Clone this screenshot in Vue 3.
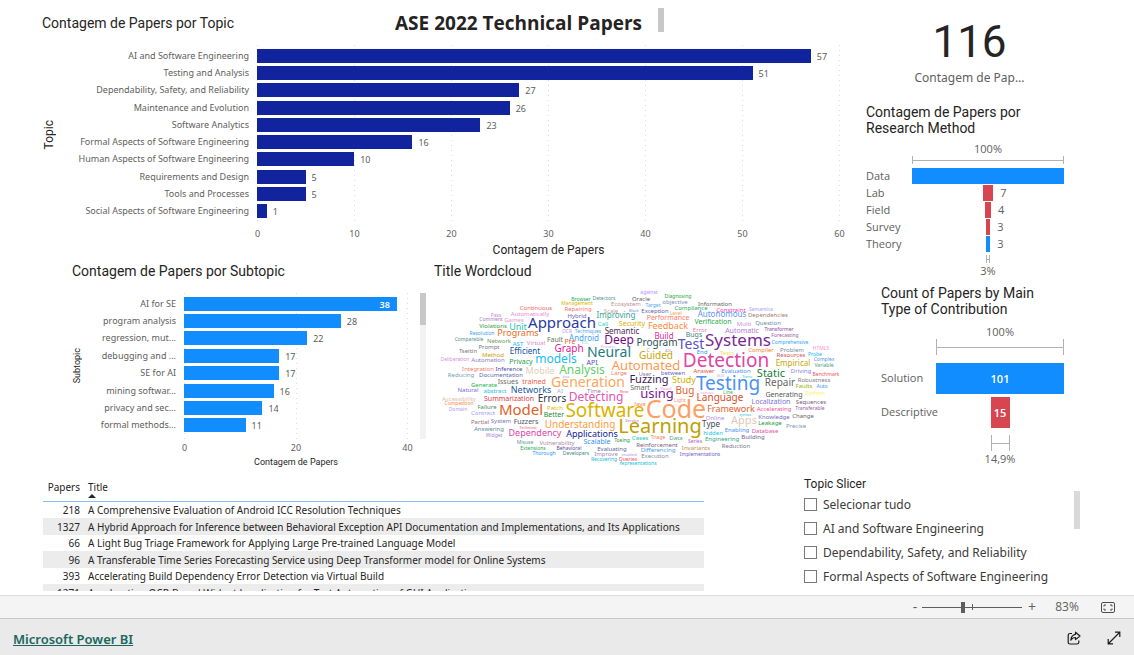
<script setup>
const topicChart = {
  id: 'topic',
  yTitle: 'Topic',
  max: 60,
  ticks: [0, 10, 20, 30, 40, 50, 60],
  rows: [
    ['AI and Software Engineering', 57],
    ['Testing and Analysis', 51],
    ['Dependability, Safety, and Reliability', 27],
    ['Maintenance and Evolution', 26],
    ['Software Analytics', 23],
    ['Formal Aspects of Software Engineering', 16],
    ['Human Aspects of Software Engineering', 10],
    ['Requirements and Design', 5],
    ['Tools and Processes', 5],
    ['Social Aspects of Software Engineering', 1],
  ],
}

const subtopicChart = {
  id: 'subtopic',
  yTitle: 'Subtopic',
  max: 40,
  ticks: [0, 20, 40],
  rows: [
    ['AI for SE', 38],
    ['program analysis', 28],
    ['regression, mut...', 22],
    ['debugging and ...', 17],
    ['SE for AI', 17],
    ['mining softwar...', 16],
    ['privacy and sec...', 14],
    ['formal methods...', 11],
  ],
}

const funnels = [
  {
    id: 'method',
    title: ['Contagem de Papers por', 'Research Method'],
    max: 99,
    last: '3%',
    rows: [
      { label: 'Data', value: 99, tone: 'blue', show: 'none' },
      { label: 'Lab', value: 7, tone: 'red', show: 'outside' },
      { label: 'Field', value: 4, tone: 'red', show: 'outside' },
      { label: 'Survey', value: 3, tone: 'red', show: 'outside' },
      { label: 'Theory', value: 3, tone: 'blue', show: 'outside' },
    ],
  },
  {
    id: 'contribution',
    title: ['Count of Papers by Main', 'Type of Contribution'],
    max: 101,
    last: '14,9%',
    rows: [
      { label: 'Solution', value: 101, tone: 'blue', show: 'inside' },
      { label: 'Descriptive', value: 15, tone: 'red', show: 'inside' },
    ],
  },
]

const pct = (value, max) => `${(value / max) * 100}%`

const papers = [
  [218, 'A Comprehensive Evaluation of Android ICC Resolution Techniques'],
  [1327, 'A Hybrid Approach for Inference between Behavioral Exception API Documentation and Implementations, and Its Applications'],
  [66, 'A Light Bug Triage Framework for Applying Large Pre-trained Language Model'],
  [96, 'A Transferable Time Series Forecasting Service using Deep Transformer model for Online Systems'],
  [393, 'Accelerating Build Dependency Error Detection via Virtual Build'],
  [1271, 'Accelerating OCR-Based Widget Localization for Test Automation of GUI Applications'],
]

const slicer = [
  'Selecionar tudo',
  'AI and Software Engineering',
  'Dependability, Safety, and Reliability',
  'Formal Aspects of Software Engineering',
]

// word, centre x, baseline y, size, colour
const words = [
  ['Browser', 581, 301, 5, '#1aab40'], ['Detectors', 604, 300, 5, '#4f9095'],
  ['Management', 577, 305, 5, '#d9b300'], ['Continuous', 536, 310, 6, '#fd625e'],
  ['Repairing', 578, 311, 6, '#fd7070'], ['Automatically', 530, 316, 6, '#e68ad8'],
  ['Ecosystem', 626, 306, 6, '#b98f8f'], ['Oracle', 641, 301, 6, '#6b6460'],
  ['against', 649, 294, 5, '#b58cff'], ['Pass', 496, 317, 5, '#c88ad0'],
  ['Comment', 491, 321, 5, '#a97bb5'], ['Games', 514, 322, 6, '#e39acf'],
  ['Violations', 493, 328, 6, '#2e9e4a'], ['Unit', 518, 330, 9, '#15c6c0'],
  ['Approach', 562, 328, 15, '#2a3aa5'], ['Hybrid', 577, 318, 6, '#6a66b5'],
  ['Improving', 616, 318, 8, '#37a794'], ['Scale', 611, 313, 6, '#c09fa0'],
  ['Black', 634, 312, 4, '#7b8be8'], ['Exception', 655, 313, 6, '#5b5fa0'],
  ['Call', 603, 326, 6, '#1fd0c8'], ['Security', 632, 326, 7, '#e0b000'],
  ['Programs', 518, 336, 9, '#f06a1a'], ['Resolution', 482, 335, 5, '#3b9ef0'],
  ['OCR', 567, 333, 5, '#b79be0'], ['Techniques', 588, 333, 5, '#4aa3f0'],
  ['Semantic', 622, 334, 8, '#4a2a55'], ['Android', 584, 341, 8, '#4a9ff5'],
  ['Fault', 555, 342, 7, '#5b7a50'], ['Pre', 570, 344, 7, '#f0641e'],
  ['ICC', 585, 344, 4, '#7ac5f0'], ['Process', 608, 348, 4, '#c9a5f0'],
  ['Deep', 619, 344, 12, '#750985'], ['Comparable', 469, 341, 5, '#4f9088'],
  ['Network', 499, 343, 6, '#6f9a5e'], ['AST', 518, 346, 6, '#15b5f5'],
  ['Virtual', 536, 345, 6, '#d98ad0'], ['Graph', 569, 352, 10, '#e6178f'],
  ['Neural', 609, 357, 14, '#1f7a80'], ['Prompt', 489, 349, 6, '#777777'],
  ['Tseitin', 468, 353, 6, '#777777'], ['Method', 493, 357, 6, '#c9a100'],
  ['Efficient', 525, 354, 8, '#0a4fa8'], ['Deliberation', 455, 361, 5, '#e08adb'],
  ['Automation', 488, 362, 6, '#8a7bd0'], ['Privacy', 521, 364, 7, '#1aa050'],
  ['models', 556, 363, 12, '#15bdf0'], ['API', 592, 365, 7, '#5a52b0'],
  ['Analysis', 582, 374, 12, '#5fd068'], ['Integration', 478, 371, 6, '#fd7a70'],
  ['Inference', 509, 371, 6, '#4a4fa8'], ['Mobile', 540, 374, 9, '#e0cfb8'],
  ['Reducing', 461, 377, 6, '#6f9fb0'], ['Documentation', 501, 377, 6, '#5a6aa8'],
  ['Large', 619, 375, 6, '#fd7b5a'], ['Automated', 646, 370, 13, '#fe9a50'],
  ['box', 566, 378, 4, '#b59be0'], ['Guided', 656, 359, 10, '#c9a500'],
  ['Fuzzing', 649, 383, 11, '#3a2050'], ['Issues', 508, 384, 7, '#6b6b6b'],
  ['trained', 534, 384, 7, '#f0604a'], ['Generation', 588, 387, 14, '#fea55e'],
  ['objective', 675, 304, 6, '#7a8fb0'], ['Diagnosing', 678, 298, 5, '#1aab40'],
  ['Information', 715, 306, 6, '#666666'], ['Compliance', 691, 310, 6, '#1aab60'],
  ['Target', 653, 307, 5, '#4aa3f0'], ['Constraint', 731, 312, 6, '#f73db5'],
  ['Semantics', 761, 311, 5, '#a5a0f5'], ['Level', 676, 315, 5, '#fea050'],
  ['Performance', 668, 320, 7, '#fd7a6a'], ['Autonomous', 722, 317, 8, '#5c93f5'],
  ['Dependencies', 768, 317, 6, '#a08070'], ['Verification', 713, 324, 7, '#1faa45'],
  ['Feedback', 668, 329, 9, '#fe8a3c'], ['Multi', 744, 326, 6, '#d08ae0'],
  ['Question', 768, 325, 6, '#6a92a5'], ['Error', 700, 332, 6, '#f57aa5'],
  ['Automatic', 742, 333, 7, '#b57ad5'], ['Transformer', 779, 331, 5, '#8a4a9a'],
  ['Bugs', 694, 337, 7, '#3f857f'], ['Build', 664, 339, 8, '#e8279a'],
  ['Systems', 738, 346, 17, '#7a2a95'], ['Forecasting', 785, 337, 5, '#9a5aa5'],
  ['Comprehensive', 790, 344, 5, '#30a5f5'], ['Program', 657, 346, 10, '#2a5050'],
  ['Test', 691, 349, 14, '#5a50c8'], ['Problem', 792, 352, 6, '#7088a8'],
  ['HTML5', 821, 350, 5, '#f595c5'], ['C', 648, 352, 5, '#9999cc'],
  ['AIS', 668, 352, 4, '#bb99dd'], ['End', 702, 354, 6, '#2a9af5'],
  ['Tests', 727, 355, 6, '#ffdb69'], ['Compiler', 761, 352, 6, '#fe8030'],
  ['Resources', 791, 357, 6, '#d5506a'], ['Probe', 815, 356, 5, '#15b5f0'],
  ['Detection', 726, 367, 19, '#e044a7'], ['Empirical', 793, 366, 8, '#c5a800'],
  ['Complex', 824, 361, 5, '#4a95f0'], ['Variable', 824, 367, 5, '#4a9a85'],
  ['Answer', 704, 373, 6, '#e8503a'], ['Evaluation', 736, 373, 6, '#3f95f5'],
  ['Static', 771, 377, 11, '#168040'], ['Driving', 801, 373, 6, '#7a85f0'],
  ['Benchmark', 826, 376, 5, '#f05058'], ['User', 645, 376, 6, '#8a7a9a'],
  ['between', 673, 375, 6, '#6a6ab5'], ['Trees', 747, 378, 4, '#15c5e8'],
  ['GUI', 720, 377, 4, '#b5a5e5'], ['Study', 684, 383, 9, '#d0b000'],
  ['Robustness', 814, 382, 6, '#808088'], ['Testing', 728, 390, 19, '#4a90f5'],
  ['Repair', 780, 386, 10, '#666666'], ['Generate', 484, 387, 6, '#1ab550'],
  ['Natural', 468, 392, 6, '#7a70d8'], ['abstract', 495, 393, 6, '#18bde8'],
  ['Networks', 531, 393, 9, '#1a5aa5'], ['AI', 560, 393, 6, '#b5a5e5'],
  ['Time', 594, 393, 6, '#9a7aaa'], ['New', 624, 393, 4, '#f55a6a'],
  ['Smart', 640, 390, 7, '#666666'], ['Accessibility', 459, 401, 6, '#d5c0b0'],
  ['Competition', 459, 405, 5, '#fe8a3c'], ['Domain', 458, 411, 5, '#b59bf5'],
  ['Summarization', 509, 401, 7, '#d8404a'], ['Errors', 552, 402, 10, '#2a3550'],
  ['Detecting', 596, 401, 12, '#e055b5'], ['Failure', 487, 409, 6, '#4f8a60'],
  ['Model', 521, 415, 15, '#e0602a'], ['Patch', 555, 410, 6, '#e0b800'],
  ['Contract', 483, 415, 6, '#9aa0f5'], ['Better', 554, 417, 7, '#1e8a3a'],
  ['Software', 605, 417, 19, '#d9b300'], ['Partial', 480, 424, 6, '#9a6a75'],
  ['System', 501, 423, 6, '#7a75c5'], ['Fuzzers', 526, 424, 7, '#4f5560'],
  ['Understanding', 580, 428, 10, '#fe9a3a'], ['Technical', 528, 429, 4, '#f5505a'],
  ['Answering', 489, 431, 6, '#5a8a95'], ['Dependency', 535, 436, 9, '#e044a7'],
  ['Applications', 592, 437, 9, '#12239e'], ['Widget', 494, 437, 5, '#a585e5'],
  ['Learning', 660, 433, 20, '#c0a000'], ['Misuse', 525, 444, 5, '#5a9a95'],
  ['Service', 632, 422, 4, '#c05ad0'],
  ['Vulnerability', 557, 445, 6, '#b08a9a'], ['Scalable', 597, 444, 7, '#2f90f5'],
  ['Toeing', 622, 442, 5, '#1e9a40'], ['Extensions', 533, 450, 5, '#1aab50'],
  ['Behavioral', 569, 450, 5, '#5a4aa0'], ['Evaluating', 612, 451, 6, '#5a6a9a'],
  ['Improve', 606, 456, 6, '#9a8abf'], ['Thorough', 544, 455, 5, '#3095f5'],
  ['Developers', 576, 455, 5, '#3f8a8a'], ['Recovering', 604, 461, 5, '#15b5e8'],
  ['Queries', 628, 461, 5, '#f5505a'], ['enabled', 629, 456, 4, '#b58af5'],
  ['representations', 638, 465, 5, '#15bde0'], ['Cases', 640, 440, 6, '#15c8b0'],
  ['Visual', 666, 390, 4, '#f57ae5'], ['using', 657, 398, 13, '#7a1a95'],
  ['Bug', 685, 394, 10, '#e0602a'], ['Java', 640, 406, 6, '#fe8040'],
  ['Light', 680, 402, 5, '#fe9a70'], ['canvas', 707, 394, 4, '#f59ae5'],
  ['Line', 728, 394, 5, '#2abb60'], ['Language', 720, 401, 10, '#d8502a'],
  ['Generating', 784, 397, 7, '#555555'], ['Faults', 804, 388, 6, '#9ab010'],
  ['Auto', 822, 388, 5, '#4095f5'], ['Python', 815, 395, 6, '#fff060'],
  ['Localization', 771, 404, 7, '#7a70d8'], ['Sequences', 811, 404, 6, '#7a6080'],
  ['Framework', 731, 412, 9, '#e8602a'], ['Accelerating', 774, 411, 6, '#f050a5'],
  ['Transferable', 810, 410, 5, '#9a5aa5'], ['Code', 676, 418, 25, '#fe9f66'],
  ['Online', 715, 420, 6, '#b58ae5'], ['syntax', 745, 416, 4, '#15c8e0'],
  ['Apps', 744, 424, 11, '#dccbb8'], ['Knowledge', 774, 419, 6, '#7a6abf'],
  ['Change', 803, 418, 6, '#666666'], ['Leakage', 770, 425, 6, '#1e9a40'],
  ['Precise', 796, 428, 6, '#7a9ab0'], ['Type', 711, 427, 8, '#3a4a50'],
  ['hidden', 713, 435, 6, '#15c8e0'], ['Enabling', 737, 432, 6, '#4a90f5'],
  ['Database', 765, 433, 6, '#e8509a'], ['Building', 753, 439, 6, '#6f5a90'],
  ['Engineering', 722, 441, 6, '#2aa58a'], ['Triage', 658, 439, 5, '#f58050'],
  ['Data', 676, 440, 6, '#5aa58a'], ['Series', 695, 443, 5, '#b55ac5'],
  ['Reinforcement', 657, 447, 6, '#7a6080'], ['Differencing', 658, 452, 6, '#4aa0e5'],
  ['Execution', 655, 458, 6, '#8a8a9a'], ['Invariants', 696, 450, 6, '#c0905a'],
  ['Reduction', 736, 448, 6, '#7a7a8a'], ['Implementations', 700, 456, 5, '#6a60c8'],
]
</script>

<template>
  <div class="page">
    <main class="report">
      <div class="upper">
        <div class="left">
          <header class="banner">
            <h2 class="visual-title">Contagem de Papers por Topic</h2>
            <h1 class="report-title">ASE 2022 Technical Papers</h1>
            <span class="thumb banner-thumb"></span>
          </header>

          <section class="chart topic" aria-label="Contagem de Papers por Topic">
            <div class="y-title"><span>{{ topicChart.yTitle }}</span></div>
            <div class="labels">
              <span v-for="row in topicChart.rows" :key="row[0]">{{ row[0] }}</span>
            </div>
            <div class="gridlines"><i v-for="t in topicChart.ticks" :key="t"></i></div>
            <div class="bars">
              <div v-for="row in topicChart.rows" :key="row[0]" class="bar-row">
                <div class="bar" :style="{ width: pct(row[1], topicChart.max) }"></div>
                <span class="value">{{ row[1] }}</span>
              </div>
            </div>
            <div class="ticks"><span v-for="t in topicChart.ticks" :key="t">{{ t }}</span></div>
            <div class="x-title">Contagem de Papers</div>
          </section>

          <div class="middle">
            <section class="subtopic-visual">
              <h2 class="visual-title indented">Contagem de Papers por Subtopic</h2>
              <div class="chart subtopic">
                <div class="y-title"><span>{{ subtopicChart.yTitle }}</span></div>
                <div class="labels">
                  <span v-for="row in subtopicChart.rows" :key="row[0]">{{ row[0] }}</span>
                </div>
                <div class="gridlines"><i v-for="t in subtopicChart.ticks" :key="t"></i></div>
                <div class="bars">
                  <div v-for="(row, i) in subtopicChart.rows" :key="row[0]" class="bar-row">
                    <div class="bar" :style="{ width: pct(row[1], subtopicChart.max) }">
                      <span v-if="i === 0" class="inner-value">{{ row[1] }}</span>
                    </div>
                    <span v-if="i > 0" class="value">{{ row[1] }}</span>
                  </div>
                </div>
                <div class="ticks"><span v-for="t in subtopicChart.ticks" :key="t">{{ t }}</span></div>
                <div class="x-title">Contagem de Papers</div>
                <div class="track"><span class="thumb"></span></div>
              </div>
            </section>

            <section class="cloud-visual">
              <h2 class="visual-title">Title Wordcloud</h2>
              <svg class="cloud" viewBox="434 284 416 186" role="img" aria-label="Title Wordcloud">
                <text
                  v-for="w in words"
                  :key="w[0]"
                  :x="w[1]"
                  :y="w[2]"
                  :font-size="w[3]"
                  :fill="w[4]"
                  text-anchor="middle"
                >{{ w[0] }}</text>
              </svg>
            </section>
          </div>
        </div>

        <aside class="right">
          <section class="card">
            <strong class="card-number">116</strong>
            <span class="card-label">Contagem de Pap...</span>
          </section>

          <section v-for="f in funnels" :key="f.id" class="funnel" :class="f.id">
            <h2 class="visual-title">{{ f.title[0] }}<br />{{ f.title[1] }}</h2>
            <div class="stage">
              <div class="percent">100%</div>
              <div class="bracket"></div>
            </div>
            <div class="funnel-rows">
              <div v-for="r in f.rows" :key="r.label" class="funnel-row">
                <span class="funnel-label">{{ r.label }}</span>
                <div class="funnel-lane" :style="{ '--w': pct(r.value, f.max) }">
                  <div class="funnel-bar" :class="r.tone">
                    <span v-if="r.show === 'inside'">{{ r.value }}</span>
                  </div>
                  <span v-if="r.show === 'outside'" class="funnel-value">{{ r.value }}</span>
                </div>
              </div>
            </div>
            <div class="stage">
              <div class="bracket" :style="{ width: pct(f.rows[f.rows.length - 1].value, f.max) }"></div>
              <div class="percent last">{{ f.last }}</div>
            </div>
          </section>
        </aside>
      </div>

      <div class="lower">
        <div class="table-visual">
          <table>
            <thead>
              <tr>
                <th class="num">Papers</th>
                <th>
                  Title
                  <svg class="sort" viewBox="0 0 8 4" aria-hidden="true"><path d="M0 4 4 0l4 4z" /></svg>
                </th>
              </tr>
            </thead>
            <tbody>
              <tr v-for="p in papers" :key="p[0]">
                <td class="num">{{ p[0] }}</td>
                <td>{{ p[1] }}</td>
              </tr>
            </tbody>
          </table>
        </div>

        <section class="slicer">
          <div>
            <h3>Topic Slicer</h3>
            <label v-for="s in slicer" :key="s"><input type="checkbox" />{{ s }}</label>
          </div>
          <span class="thumb slicer-thumb"></span>
        </section>
      </div>
    </main>

    <div class="zoombar">
      <button type="button" class="minus" aria-label="Zoom out">-</button>
      <input type="range" min="0" max="100" value="41" aria-label="Zoom" />
      <button type="button" class="plus" aria-label="Zoom in">+</button>
      <span class="zoom-value">83%</span>
      <button type="button" class="fit" aria-label="Fit to page">
        <svg viewBox="0 0 15 11" width="15" height="11" fill="none" stroke="#4f4d4b">
          <rect x=".5" y=".5" width="13" height="10" rx="1.500" />
          <path d="M3 4.500V3h2M9 3h2v1.500M11 6.500V8H9M5 8H3V6.500" />
        </svg>
      </button>
    </div>

    <footer class="footer">
      <a href="#">Microsoft Power BI</a>
      <div class="actions">
        <button type="button" aria-label="Share">
          <svg viewBox="0 0 14 14" width="14" height="14" fill="none" stroke="#1b1b1b" stroke-width="1.200">
            <path d="M5 2.500H3A1.800 1.800 0 0 0 1.200 4.300v6.900A1.800 1.800 0 0 0 3 13h7a1.800 1.800 0 0 0 1.800-1.800V9.500" />
            <path d="M8.500 1.200 13 5 8.500 8.600V6.500C6.300 6.500 4.900 7.400 3.800 9.200 4.100 6 5.700 3.700 8.500 3.300z" stroke-linejoin="round" />
          </svg>
        </button>
        <button type="button" aria-label="Full screen">
          <svg viewBox="0 0 14 14" width="14" height="14" fill="none" stroke="#1b1b1b" stroke-width="1.200">
            <path d="M1.500 12.500l11-11M8 1.200h4.800V6M1.200 8v4.800H6" />
          </svg>
        </button>
      </div>
    </footer>
  </div>
</template>

<style>
body {
  background: #fff;
}
</style>

<style scoped>
.page {
  min-height: 100vh;
  display: flex;
  flex-direction: column;
  font-family: "Noto Sans", "Open Sans", sans-serif;
  font-size: 9px;
  color: #252423;
}
.report {
  flex: 1;
  display: flex;
  flex-direction: column;
}
h1, h2, h3 {
  margin: 0;
}
.thumb {
  display: block;
  width: 6px;
  background: #c8c8c8;
}
.visual-title {
  font: 400 14px/16px Roboto, sans-serif;
  color: #252423;
}
.upper {
  display: grid;
  grid-template-columns: minmax(0, 1fr) 284px;
}
.banner {
  display: grid;
  grid-template-columns: 353px auto 1fr;
  align-items: center;
  height: 45px;
  padding-left: 42px;
}
.report-title {
  font: 700 19px/24px "Open Sans", sans-serif;
}
.banner-thumb {
  height: 24px;
  margin: 0 0 6px 16px;
}

.chart {
  display: grid;
  color: #605e5c;
}
.topic {
  grid-template-columns: 16px minmax(0, 1fr) 583px;
  grid-template-rows: 180px 18px 14px;
  padding: 0 10px 0 41px;
}
.subtopic {
  grid-template-columns: 16px minmax(0, 1fr) 224px 18px;
  grid-template-rows: 146px 16px 14px;
  margin-top: 9px;
  padding: 0 8px 0 69px;
}
.y-title {
  grid-area: 1 / 1;
  display: flex;
  align-items: center;
  justify-content: center;
  color: #252423;
}
.y-title span {
  writing-mode: vertical-rl;
  transform: rotate(180deg);
  font: 12px/16px Roboto, sans-serif;
}
.subtopic .y-title span {
  font-size: 9px;
}
.labels,
.bars {
  display: grid;
  grid-auto-rows: 1fr;
  padding: 2px 0 5px;
}
.labels {
  grid-area: 1 / 2;
  padding-right: 8px;
  text-align: right;
  white-space: nowrap;
}
.labels span {
  align-self: center;
  line-height: 14px;
}
.bars {
  grid-area: 1 / 3;
  z-index: 1;
}
.bar-row {
  display: flex;
  align-items: center;
}
.bar {
  flex: none;
  height: 14px;
  background: #12239e;
  text-align: right;
}
.subtopic .bar {
  background: #118dff;
}
.value {
  padding: 2px 0 0 6px;
  line-height: 12px;
}
.inner-value {
  padding-right: 7px;
  line-height: 15px;
  font-weight: 600;
  color: #fff;
}
.gridlines,
.ticks {
  grid-area: 1 / 3;
  display: flex;
  justify-content: space-between;
}
.gridlines i {
  width: 1px;
  background: repeating-linear-gradient(#dcdcdc 0 1px, transparent 1px 5px);
}
.ticks {
  grid-area: 2 / 3;
  padding-top: 2px;
  line-height: 14px;
}
.ticks span {
  display: flex;
  justify-content: center;
  width: 1px;
}
.x-title {
  grid-area: 3 / 3;
  text-align: center;
  font: 12px/14px Roboto, sans-serif;
  color: #252423;
}
.subtopic .x-title {
  font-size: 9px;
}
.track {
  grid-area: 1 / 4;
  justify-self: end;
  width: 6px;
  background: #f3f2f1;
}
.track .thumb {
  height: 32px;
}

.middle {
  display: grid;
  grid-template-columns: minmax(0, 434fr) minmax(0, 416fr);
  padding-top: 1px;
}
.middle .visual-title {
  line-height: 26px;
}
.indented {
  padding-left: 72px;
}
.cloud {
  display: block;
  width: 100%;
}

.right {
  padding: 14px 70px 0 0;
}
.card {
  display: flex;
  flex-direction: column;
  align-items: center;
  padding-left: 25px;
}
.card-number {
  font: 400 44px/56px Roboto, sans-serif;
}
.card-label {
  font-size: 12px;
  line-height: 16px;
  color: #605e5c;
}
.funnel {
  --label: 46px;
  --row: 17px;
  --bar: 16px;
  --cap: 8px;
  --gap: 3px;
  font: 11px/14px "Open Sans", sans-serif;
  color: #605e5c;
}
.method {
  padding: 18px 0 0 16px;
}
.contribution {
  --label: 55px;
  --row: 34px;
  --bar: 31px;
  --cap: 16px;
  --gap: 6px;
  padding: 7px 0 0 31px;
}
.stage {
  padding: 6px 0 0 var(--label);
}
.contribution .stage {
  padding-top: 8px;
}
.funnel-rows + .stage,
.contribution .funnel-rows + .stage {
  padding-top: var(--gap);
}
.percent {
  text-align: center;
}
.last {
  padding-top: 1px;
}
.bracket {
  box-sizing: border-box;
  height: var(--cap);
  margin: 0 auto;
  border: solid #b3b0ad;
  border-width: 0 1px;
  background: linear-gradient(#b3b0ad, #b3b0ad) center / 100% 1px no-repeat;
}
.funnel-rows {
  padding-top: var(--gap);
}
.funnel-row {
  display: grid;
  grid-template-columns: var(--label) minmax(0, 1fr);
  align-items: center;
  height: var(--row);
}
.funnel-label {
  line-height: 16px;
}
.funnel-lane {
  display: grid;
  grid-template-columns: minmax(0, 1fr) var(--w) minmax(0, 1fr);
  align-items: center;
}
.funnel-bar {
  grid-column: 2;
  height: var(--bar);
  line-height: var(--bar);
  text-align: center;
  font-weight: 600;
  color: #fff;
}
.blue {
  background: #118dff;
}
.red {
  background: #d64550;
}
.funnel-value {
  padding-left: 7px;
  line-height: 16px;
}

.lower {
  flex: 1;
  display: grid;
  grid-template-columns: minmax(0, 661fr) minmax(0, 276fr);
  column-gap: 100px;
  padding: 7px 54px 0 43px;
}
.table-visual {
  height: 114px;
  overflow: hidden;
}
table {
  width: 100%;
  border-collapse: collapse;
  font-size: 10px;
  line-height: 14px;
}
th,
td {
  height: 16px;
  padding: 0 4px;
  text-align: left;
  font-weight: 400;
  white-space: nowrap;
}
th {
  height: 21px;
  padding-top: 3px;
  vertical-align: top;
  border-bottom: 1px solid #85c1f5;
}
.num {
  width: 33px;
  text-align: right;
}
tbody tr:nth-child(even) {
  background: #ececec;
}
tbody tr:nth-child(even) td {
  height: 17px;
}
.sort {
  display: block;
  width: 8px;
  height: 4px;
  fill: #252423;
}
.slicer {
  display: flex;
  justify-content: space-between;
}
.slicer h3 {
  font: 400 12px/15px Roboto, sans-serif;
}
.slicer label {
  display: flex;
  align-items: center;
  gap: 6px;
  height: 24px;
  font-size: 12px;
  white-space: nowrap;
  color: #3b3a39;
}
.slicer input {
  appearance: none;
  width: 13px;
  height: 13px;
  margin: 0;
  border: 1px solid #7a7876;
  background: #fff;
}
.slicer-thumb {
  height: 38px;
  margin-top: 14px;
  background: #d9d9d9;
}

.zoombar {
  display: flex;
  align-items: center;
  justify-content: flex-end;
  height: 22px;
  padding-right: 18px;
  border-top: 1px solid #dcdcdc;
  background: #f4f4f4;
  font: 12px/20px "Open Sans", sans-serif;
  color: #605e5c;
}
button {
  padding: 0;
  border: 0;
  background: none;
  font: inherit;
  color: inherit;
}
button svg {
  display: block;
}
.minus,
.plus {
  width: 14px;
  font-size: 14px;
  line-height: 20px;
}
.plus {
  width: 20px;
}
.zoombar input {
  appearance: none;
  width: 100px;
  height: 11px;
  margin: 0;
  background:
    linear-gradient(#605e5c, #605e5c) center / 1px 6px no-repeat,
    linear-gradient(#605e5c, #605e5c) center / 100% 1px no-repeat;
}
.zoombar input::-webkit-slider-thumb {
  appearance: none;
  width: 4px;
  height: 11px;
  background: #605e5c;
}
.zoom-value {
  width: 50px;
  text-align: center;
}
.fit {
  margin-left: 9px;
}
.footer {
  display: flex;
  align-items: center;
  justify-content: space-between;
  height: 36px;
  padding: 0 13px;
  border-top: 1px solid #c8c8c8;
  background: #eaeaea;
}
.footer a {
  padding-top: 3px;
  font-size: 13px;
  line-height: 20px;
  font-weight: 600;
  color: #19675d;
}
.actions {
  display: flex;
  gap: 26px;
  padding-top: 2px;
}
</style>
